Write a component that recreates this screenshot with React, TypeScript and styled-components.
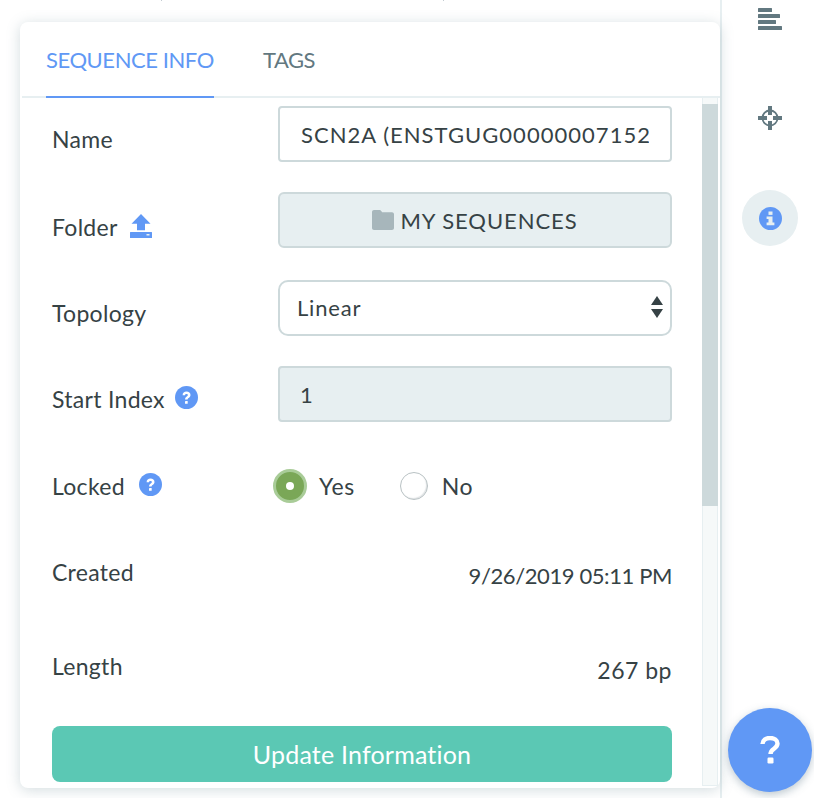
import { createGlobalStyle, styled } from "styled-components";

const GlobalStyle = createGlobalStyle`
  html, body {
    margin: 0;
    padding: 0;
    height: 100%;
    background: #fff;
    overflow: hidden;
  }
  * { box-sizing: border-box; }
  body {
    font-family: "Lato", "Liberation Sans", sans-serif;
    color: #364245;
  }
`;

const InfoIcon = () => (
  <svg width="23" height="23" viewBox="0 0 23 23">
    <circle cx="11.5" cy="11.5" r="11.5" fill="#6098f5" />
    <rect x="9.5" y="4.5" width="4" height="3.4" fill="#e7eff1" />
    <path d="M7.6 9.4h5.9v6.2h1.9v2.6H7.6v-2.6h1.9v-3.6H7.6z" fill="#e7eff1" />
  </svg>
);

const HelpIcon = () => (
  <svg width="23" height="23" viewBox="0 0 23 23">
    <circle cx="11.5" cy="11.5" r="11.5" fill="#6098f5" />
    <path
      d="M7.6 9.2c0-2.2 1.7-3.6 3.9-3.6 2.3 0 4 1.4 4 3.4 0 1.6-.9 2.3-1.9 3-.7.5-1 .8-1 1.6H10c0-1.5.5-2.2 1.5-2.9.8-.6 1.4-.9 1.4-1.6 0-.7-.6-1.2-1.4-1.2-.9 0-1.4.5-1.5 1.3z"
      fill="#fff"
    />
    <rect x="10" y="15" width="2.7" height="2.8" rx=".4" fill="#fff" />
  </svg>
);

const UploadIcon = () => (
  <svg width="24" height="24" viewBox="0 0 24 24">
    <path d="M12 0l9.5 9.8H16v6.4H8V9.8H2.500z" fill="#6098f5" />
    <rect x="1" y="18" width="22" height="6" rx=".5" fill="#6098f5" />
    <rect x="17.500" y="20" width="3" height="1.500" fill="#e7eff1" />
  </svg>
);

const FolderIcon = () => (
  <svg width="22" height="20" viewBox="0 0 22 20">
    <path
      d="M0 2c0-1.100.9-2 2-2h5.500c.8 0 1.300.4 1.700 1l1 1.300H20c1.100 0 2 .9 2 2V18c0 1.100-.9 2-2 2H2c-1.100 0-2-.9-2-2z"
      fill="#a7b6bb"
    />
  </svg>
);

const AlignIcon = () => (
  <svg width="24" height="22" viewBox="0 0 24 22" fill="#627880">
    <rect x="0" y="0" width="14" height="4" rx=".5" />
    <rect x="0" y="6" width="22" height="4" rx=".5" />
    <rect x="0" y="12" width="18" height="4" rx=".5" />
    <rect x="0" y="18" width="24" height="4" rx=".5" />
  </svg>
);

const TargetIcon = () => (
  <svg width="24" height="24" viewBox="0 0 24 24" fill="none">
    <circle cx="12" cy="12" r="7.500" stroke="#627880" strokeWidth="1.800" />
    <path d="M12 0v9M12 15v9M0 12h9M15 12h9" stroke="#627880" strokeWidth="4" />
  </svg>
);

const SelectArrows = () => (
  <svg width="12" height="22" viewBox="0 0 12 22" fill="#364245">
    <path d="M6 0l6 9H0z" />
    <path d="M0 13h12l-6 9z" />
  </svg>
);

const HelpMark = () => (
  <svg width="20" height="28" viewBox="0 0 20 28" fill="none">
    <path
      d="M2.500 8C2.700 4 5.800 2 10 2c4.300 0 7.500 2.200 7.500 5.500 0 2.700-1.700 3.900-3.500 5.200-2 1.400-3.500 2.500-3.500 5.300"
      stroke="#fff"
      strokeWidth="4.400"
    />
    <rect x="7.500" y="21.500" width="6" height="6" rx="1.200" fill="#fff" />
  </svg>
);

export default function App() {
  return (
    <>
      <GlobalStyle />
      <Page>
        <Speck $left={161} />
        <Speck $left={443} />
        <Main>
          <Panel>
            <Tabs>
              <Tab $active>SEQUENCE INFO</Tab>
              <Tab>TAGS</Tab>
            </Tabs>
            <PanelBody>
              <Form>
                <Row>
                  <Label>Name</Label>
                  <TextInput readOnly value="SCN2A (ENSTGUG00000007152" />
                </Row>
                <Row $after={32}>
                  <Label $offset={20}>
                    Folder
                    <UploadSlot>
                      <UploadIcon />
                    </UploadSlot>
                  </Label>
                  <FolderButton>
                    <FolderIcon />
                    MY SEQUENCES
                  </FolderButton>
                </Row>
                <Row>
                  <Label>Topology</Label>
                  <SelectBox>
                    Linear
                    <SelectArrows />
                  </SelectBox>
                </Row>
                <Row>
                  <Label>
                    Start Index
                    <HelpSlot $gap={10}>
                      <HelpIcon />
                    </HelpSlot>
                  </Label>
                  <TextInput $disabled readOnly value="1" />
                </Row>
                <RadioRow>
                  <Label $offset={0}>
                    Locked
                    <HelpSlot $gap={14}>
                      <HelpIcon />
                    </HelpSlot>
                  </Label>
                  <RadioGroup>
                    <RadioOption>
                      <RadioOn />
                      Yes
                    </RadioOption>
                    <RadioOption>
                      <RadioOff />
                      No
                    </RadioOption>
                  </RadioGroup>
                </RadioRow>
                <InfoRow $height={94}>
                  <Label $offset={0}>Created</Label>
                  <InfoValue $size={22} $spacing={-0.4}>9/26/2019 05:11 PM</InfoValue>
                </InfoRow>
                <InfoRow $height={75}>
                  <Label $offset={0}>Length</Label>
                  <InfoValue $size={23} $spacing={0.5}>267 bp</InfoValue>
                </InfoRow>
                <UpdateButton>Update Information</UpdateButton>
              </Form>
              <ScrollTrack>
                <ScrollThumb />
              </ScrollTrack>
            </PanelBody>
          </Panel>
        </Main>
        <Sidebar>
          <SideItem $height={30} $top={8}>
            <AlignIcon />
          </SideItem>
          <SideItem $height={24} $top={68}>
            <TargetIcon />
          </SideItem>
          <SideItem $active $height={56} $top={60}>
            <InfoIcon />
          </SideItem>
        </Sidebar>
        <Fab>
          <HelpMark />
        </Fab>
      </Page>
    </>
  );
}

const Page = styled.div`
  position: relative;
  display: flex;
  width: 814px;
  height: 798px;
  overflow: hidden;
`;

const Speck = styled.span<{ $left: number }>`
  position: absolute;
  top: 0;
  left: ${({ $left }) => $left}px;
  width: 1px;
  height: 1px;
  background: #c4ccd2;
`;

const Main = styled.main`
  width: 720px;
  flex-shrink: 0;
  padding: 22px 0 0 20px;
`;

const Panel = styled.section`
  width: 700px;
  height: 766px;
  display: flex;
  flex-direction: column;
  background: #fff;
  border-radius: 8px;
  box-shadow: 0 2px 14px rgba(98, 130, 140, 0.28);
  overflow: hidden;
  position: relative;
  z-index: 1;
`;

const Tabs = styled.nav`
  height: 76px;
  flex-shrink: 0;
  display: flex;
  gap: 49px;
  padding: 0 0 0 24px;
  margin-left: 2px;
  border-bottom: 2px solid #e7eff1;
`;

const Tab = styled.div<{ $active?: boolean }>`
  height: 76px;
  line-height: 76px;
  font-size: 22px;
  letter-spacing: -0.43px;
  color: ${({ $active }) => ($active ? "#6098f5" : "#627880")};
  border-bottom: 2px solid ${({ $active }) => ($active ? "#6098f5" : "transparent")};
`;

const PanelBody = styled.div`
  flex: 1;
  min-height: 0;
  display: flex;
  padding-right: 2px;
`;

const Form = styled.div`
  flex: 1;
  padding: 8px 30px 0 32px;
`;

const Row = styled.div<{ $after?: number }>`
  height: 56px;
  margin-bottom: ${({ $after }) => $after ?? 30}px;
  display: grid;
  grid-template-columns: 226px 394px;
`;

const Label = styled.div<{ $offset?: number }>`
  display: flex;
  align-items: center;
  height: 30px;
  margin-top: ${({ $offset }) => $offset ?? 18}px;
  font-size: 23px;
  letter-spacing: 0.3px;
`;

const UploadSlot = styled.span`
  display: flex;
  margin-left: 11px;
  margin-top: -2px;
`;

const HelpSlot = styled.span<{ $gap: number }>`
  display: flex;
  margin-left: ${({ $gap }) => $gap}px;
  margin-top: -4px;
`;

const fieldBase = `
  width: 394px;
  height: 56px;
  border: 2px solid #cdd9db;
  font-family: inherit;
  font-size: 22px;
  color: #364245;
`;

const TextInput = styled.input<{ $disabled?: boolean }>`
  ${fieldBase}
  border-radius: 4px;
  outline: none;
  letter-spacing: 1.03px;
  padding: 0 ${({ $disabled }) => ($disabled ? "20px" : "21px")};
  background: ${({ $disabled }) => ($disabled ? "#e7eff1" : "#fff")};
`;

const FolderButton = styled.div`
  ${fieldBase}
  border-radius: 6px;
  background: #e7eff1;
  display: flex;
  align-items: center;
  justify-content: center;
  gap: 6px;
  letter-spacing: 0.95px;
`;

const SelectBox = styled.div`
  ${fieldBase}
  border-radius: 10px;
  background: #fff;
  display: flex;
  align-items: center;
  justify-content: space-between;
  padding: 0 7px 2px 17px;
  letter-spacing: 0.8px;
`;

const RadioRow = styled.div`
  height: 34px;
  margin-top: 47px;
  margin-bottom: 54px;
  display: grid;
  grid-template-columns: 221px 1fr;
  align-items: center;
`;

const RadioGroup = styled.div`
  display: flex;
  gap: 45px;
`;

const RadioOption = styled.div`
  display: flex;
  align-items: center;
  gap: 12px;
  font-size: 23px;
  letter-spacing: 0.6px;
  height: 34px;
`;

const RadioOn = styled.span`
  width: 34px;
  height: 34px;
  border-radius: 50%;
  background: #7aa757;
  border: 3px solid #a9cc98;
  display: flex;
  align-items: center;
  justify-content: center;

  &::after {
    content: "";
    width: 8px;
    height: 8px;
    border-radius: 50%;
    background: #fff;
  }
`;

const RadioOff = styled.span`
  width: 28px;
  height: 28px;
  margin-right: 2px;
  border-radius: 50%;
  background: #fff;
  border: 1px solid #b9c2c4;
  box-shadow: inset -1px -1px 1px rgba(150, 160, 165, 0.3);
`;

const InfoRow = styled.div<{ $height: number }>`
  height: ${({ $height }) => $height}px;
  width: 620px;
  display: flex;
  justify-content: space-between;
  align-items: flex-start;
`;

const InfoValue = styled.div<{ $size: number; $spacing: number }>`
  font-size: ${({ $size }) => $size}px;
  letter-spacing: ${({ $spacing }) => $spacing}px;
  line-height: 30px;
  margin-top: 4px;
`;

const UpdateButton = styled.button`
  display: block;
  width: 620px;
  height: 56px;
  border: none;
  border-radius: 8px;
  background: #5bc8b4;
  color: #fff;
  font-family: inherit;
  font-size: 25px;
  letter-spacing: 0.2px;
`;

const ScrollTrack = styled.div`
  width: 16px;
  flex-shrink: 0;
  margin-bottom: 2px;
  padding-top: 6px;
  background: #f6f9f9;
  border-left: 1px solid #e7eff1;
  border-right: 1px solid #e7eff1;
  border-bottom: 1px solid #e7eff1;
`;

const ScrollThumb = styled.div`
  height: 402px;
  margin: 0 -1px;
  background: #cdd9db;
`;

const Sidebar = styled.aside`
  flex: 1;
  border-left: 2px solid #e7eff1;
  display: flex;
  flex-direction: column;
  align-items: center;
  padding-left: 4px;
`;

const SideItem = styled.div<{ $height: number; $top: number; $active?: boolean }>`
  width: 56px;
  height: ${({ $height }) => $height}px;
  margin-top: ${({ $top }) => $top}px;
  border-radius: ${({ $active }) => ($active ? "50%" : "0")};
  background: ${({ $active }) => ($active ? "#e7eff1" : "transparent")};
  display: flex;
  align-items: ${({ $active }) => ($active ? "center" : "flex-start")};
  justify-content: center;
`;

const Fab = styled.button`
  position: absolute;
  left: 728px;
  top: 708px;
  width: 84px;
  height: 84px;
  border: none;
  border-radius: 50%;
  background: #6098f5;
  box-shadow: 0 3px 8px rgba(70, 100, 120, 0.35);
  display: flex;
  align-items: center;
  justify-content: center;
  z-index: 2;
`;
